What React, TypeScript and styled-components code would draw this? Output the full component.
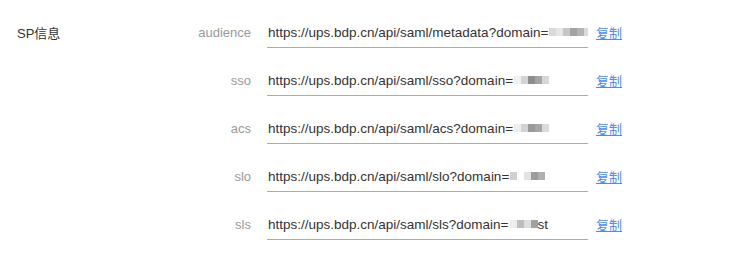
import React from 'react';
import styled, { createGlobalStyle } from 'styled-components';

const GlobalStyle = createGlobalStyle`
  body {
    margin: 0;
    background: #fff;
    font-family: "Helvetica Neue", "Liberation Sans", Arial, "Noto Sans CJK SC", sans-serif;
  }
`;

type Row = { label: string; url: string; mask: string[]; tail?: string };

const rows: Row[] = [
  { label: 'audience', url: 'https://ups.bdp.cn/api/saml/metadata?domain=', mask: ['#dadada', '#e6e6e6', '#c6c6c6', '#a2a2a2', '#b4b4b4', '#dcdcdc'] },
  { label: 'sso', url: 'https://ups.bdp.cn/api/saml/sso?domain=', mask: ['#f1f1f1', '#d4d4d4', '#8e8e8e', '#a4a4a4', '#d6d6d6'] },
  { label: 'acs', url: 'https://ups.bdp.cn/api/saml/acs?domain=', mask: ['#eeeeee', '#d2d2d2', '#9a9a9a', '#a6a6a6', '#dadada'] },
  { label: 'slo', url: 'https://ups.bdp.cn/api/saml/slo?domain=', mask: ['#d0d0d0', '#ffffff', '#e2e2e2', '#9c9c9c', '#b0b0b0'] },
  { label: 'sls', url: 'https://ups.bdp.cn/api/saml/sls?domain=', mask: ['#ececec', '#bdbdbd', '#dedede', '#a0a0a0'], tail: 'st' },
];

const App = () => {
  return (
    <>
      <GlobalStyle />
      <Section>
        {rows.map((row, i) => (
          <React.Fragment key={row.label}>
            <Title>{i === 0 ? 'SP信息' : ''}</Title>
            <Label>{row.label}</Label>
            <Field>
              {row.url}
              <Mask>
                {row.mask.map((c, j) => (
                  <Block key={j} style={{ background: c }} />
                ))}
              </Mask>
              {row.tail}
            </Field>
            <CopyLink href="#">复制</CopyLink>
          </React.Fragment>
        ))}
      </Section>
    </>
  );
};

const Section = styled.div`
  display: grid;
  grid-template-columns: 80px 170px 321px auto;
  row-gap: 16px;
  padding: 16px 0 0 17px;
  align-items: center;
`;

const Title = styled.div`
  font-size: 13px;
  color: #333;
`;

const Label = styled.div`
  font-size: 13px;
  color: #999;
  text-align: right;
  padding-right: 16px;
`;

const Field = styled.div`
  box-sizing: border-box;
  height: 32px;
  padding: 1px 0 0 1px;
  border-bottom: 1px solid #8ab0f3;
  display: flex;
  align-items: center;
  font-size: 13.5px;
  color: #333;
  white-space: nowrap;
  overflow: hidden;
`;

const Mask = styled.span`
  display: inline-flex;
  height: 8px;
  margin-left: 1px;
`;

const Block = styled.span`
  display: inline-block;
  width: 7px;
  height: 8px;
`;

const CopyLink = styled.a`
  font-size: 13px;
  color: #4a8fe7;
  text-decoration: underline;
  margin-left: 8px;
`;

export default App;
